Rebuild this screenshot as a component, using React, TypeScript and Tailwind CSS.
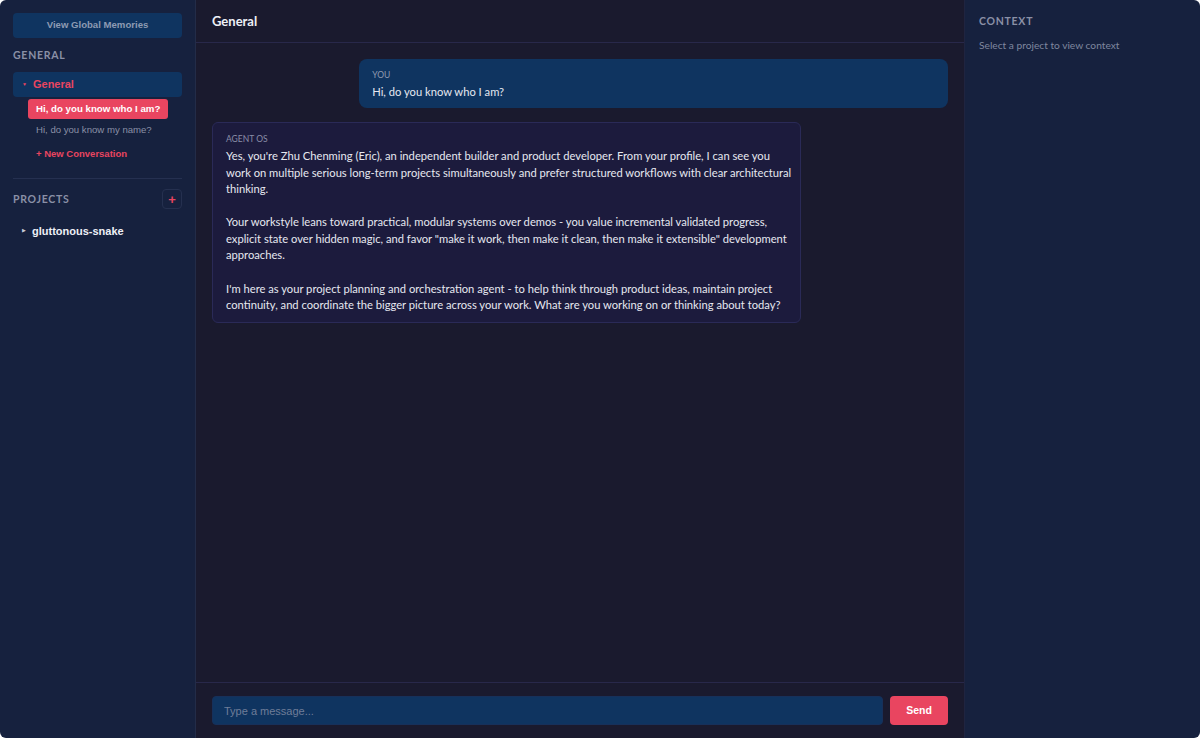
import { useState } from 'react';

const ui = { fontFamily: '"Liberation Sans", Arial, sans-serif' };
const seg = { fontFamily: 'Lato, "Noto Sans", sans-serif' };

const agentReply = `Yes, you're Zhu Chenming (Eric), an independent builder and product developer. From your profile, I can see you work on multiple serious long-term projects simultaneously and prefer structured workflows with clear architectural thinking.

Your workstyle leans toward practical, modular systems over demos - you value incremental validated progress, explicit state over hidden magic, and favor "make it work, then make it clean, then make it extensible" development approaches.

I'm here as your project planning and orchestration agent - to help think through product ideas, maintain project continuity, and coordinate the bigger picture across your work. What are you working on or thinking about today?`;

const Sidebar = () => (
  <aside className="w-[196px] shrink-0 bg-[#16213e] border-r border-[#232c48] px-[13px] pt-[13px] flex flex-col" style={ui}>
    <button className="h-[25px] w-full rounded-[4px] bg-[#0f3460] text-[9.6px] font-bold text-[#8d9bb3]">
      View Global Memories
    </button>

    <h3 className="mt-[10px] text-[10.5px] leading-[14px] font-bold tracking-[0.07em] text-[#8a90a6]" style={seg}>GENERAL</h3>

    <div className="mt-[10px] h-[25px] rounded-[4px] bg-[#0f3460] flex items-center pl-[9px] gap-[6px]">
      <span className="text-[5px] text-[#e94560]">▼</span>
      <span className="text-[11px] font-bold text-[#e94560]">General</span>
    </div>
    <div className="pl-[15px] mt-[2px] flex flex-col">
      <div className="h-[20px] w-fit whitespace-nowrap rounded-[3px] bg-[#e94560] px-[8px] flex items-center text-[9.7px] font-bold text-white">
        Hi, do you know who I am?
      </div>
      <div className="h-[22px] px-[8px] flex items-center whitespace-nowrap text-[9.6px] text-[#8a90a6]">Hi, do you know my name?</div>
      <div className="h-[26px] px-[8px] flex items-center whitespace-nowrap text-[9.5px] font-bold text-[#e94560]">+ New Conversation</div>
    </div>

    <div className="mt-[11px] border-t border-[#253050]" />

    <div className="mt-[10px] flex items-center justify-between">
      <h3 className="text-[10.5px] leading-[14px] font-bold tracking-[0.07em] text-[#8a90a6]" style={seg}>PROJECTS</h3>
      <button className="w-[20px] h-[20px] rounded-[4px] border border-[#25304f] flex items-center justify-center text-[#e94560] text-[13px] font-bold leading-none">+</button>
    </div>

    <div className="mt-[15px] h-[14px] flex items-center gap-[6px] pl-[9px]">
      <span className="text-[5px] text-[#c8cbd8]">▶</span>
      <span className="text-[11px] font-bold text-[#eef0f6]">gluttonous-snake</span>
    </div>
  </aside>
);

const ChatPane = () => {
  const [draft, setDraft] = useState('');
  return (
    <main className="flex-1 flex flex-col bg-[#1a1a2e] min-w-0" style={seg}>
      <header className="h-[43px] shrink-0 border-b border-[#28284a] flex items-center px-[16px] pt-[2px]">
        <h2 className="text-[13px] font-bold text-[#eef0f6]">General</h2>
      </header>

      <div className="flex-1 overflow-y-auto px-[16px] pt-[16px] flex flex-col gap-[14px]">
        <div className="self-end w-[80%] rounded-[8px] bg-[#0f3460] px-[13px] pt-[10px] pb-[8px]">
          <div className="text-[8.5px] leading-[12px] text-[#8f9ab0]">YOU</div>
          <div className="mt-[2px] text-[11.2px] leading-[17px] text-[#e6e8f0]">Hi, do you know who I am?</div>
        </div>

        <div className="self-start w-[80%] rounded-[6px] border border-[#2a2a57] bg-[#1c1b3d] pl-[13px] pr-[8px] pt-[10px] pb-[8px]">
          <div className="text-[8.5px] leading-[12px] text-[#8a8ea8]">AGENT OS</div>
          <div className="mt-[3px] whitespace-pre-wrap text-[11.2px] leading-[16.56px] text-[#e6e8f0]">{agentReply}</div>
        </div>
      </div>

      <div className="h-[56px] shrink-0 border-t border-[#28284a] flex items-center gap-[7px] px-[16px]">
        <input
          value={draft}
          onChange={e => setDraft(e.target.value)}
          placeholder="Type a message..."
          className="flex-1 h-[29px] rounded-[4px] bg-[#0f3460] border border-[#17305a] px-[11px] text-[11px] text-[#e6e8f0] placeholder:text-[#6f7d98] outline-none"
          style={ui}
        />
        <button className="h-[29px] w-[58px] rounded-[4px] bg-[#e94560] text-[10.5px] font-bold text-white" style={ui}>Send</button>
      </div>
    </main>
  );
};

const ContextPanel = () => (
  <aside className="w-[236px] shrink-0 bg-[#16213e] border-l border-[#1f2440] px-[14px] pt-[14px]" style={seg}>
    <h3 className="text-[10.5px] leading-[14px] font-bold tracking-[0.07em] text-[#8a90a6]">CONTEXT</h3>
    <p className="mt-[10px] text-[10.2px] leading-[14px] text-[#7f879f]">Select a project to view context</p>
  </aside>
);

export default function App() {
  return (
    <div className="w-[1200px] h-[738px] bg-white">
      <div className="h-full flex rounded-[6px] overflow-hidden">
        <Sidebar />
        <ChatPane />
        <ContextPanel />
      </div>
    </div>
  );
}
